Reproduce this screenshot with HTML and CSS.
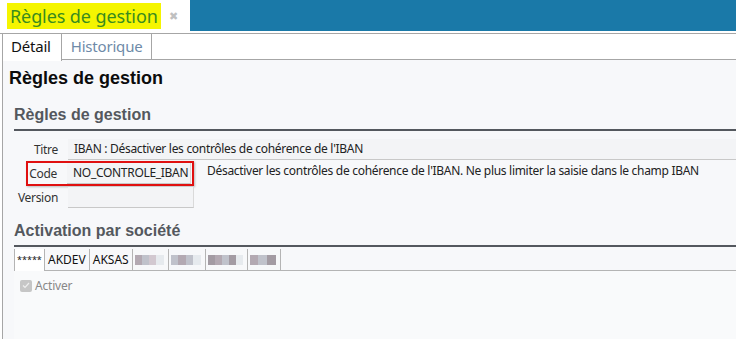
FILE: index.html
```html
<!DOCTYPE html>
<html lang="fr">
<head>
<meta charset="utf-8">
<link rel="stylesheet" href="styles.css">
</head>
<body>
<div class="topbar">
  <div class="doc-tab">
    <span class="doc-title">Règles de gestion</span>
    <span class="doc-close">✖</span>
  </div>
  <div class="blue"></div>
</div>
<div class="tabs">
  <div class="tab active">Détail</div>
  <div class="tab">Historique</div>
  <div class="tab-fill"></div>
</div>
<div class="page">
  <h1 class="page-title">Règles de gestion</h1>
  <div class="section">
    <h2 class="section-title">Règles de gestion</h2>
    <div class="form">
      <div class="row">
        <span class="label">Titre</span>
        <div class="input wide">IBAN : Désactiver les contrôles de cohérence de l'IBAN</div>
      </div>
      <div class="row">
        <div class="hl">
          <span class="label">Code</span>
          <div class="input">NO_CONTROLE_IBAN</div>
        </div>
        <span class="desc">Désactiver les contrôles de cohérence de l'IBAN. Ne plus limiter la saisie dans le champ IBAN</span>
      </div>
      <div class="row">
        <span class="label">Version</span>
        <div class="input"></div>
      </div>
    </div>
  </div>
  <div class="section">
    <h2 class="section-title second">Activation par société</h2>
    <div class="subtabs">
      <div class="stab active">*****</div>
      <div class="stab">AKDEV</div>
      <div class="stab">AKSAS</div>
      <div class="stab blur w1"><i class="b1"></i><i class="b2"></i><i class="b4"></i><i class="b5"></i></div>
      <div class="stab blur w2"><i class="b2"></i><i class="b1"></i><i class="b2"></i><i class="b5"></i></div>
      <div class="stab blur w3"><i class="b3"></i><i class="b1"></i><i class="b2"></i><i class="b3"></i><i class="b5"></i></div>
      <div class="stab blur w4"><i class="b1"></i><i class="b2"></i><i class="b3"></i></div>
      <div class="stab-fill"></div>
    </div>
    <div class="subpanel">
      <label class="check">
        <span class="box"><svg width="8" height="7" viewBox="0 0 8 7"><path d="M1 3.5 L3 5.5 L7 1" fill="none" stroke="#eee" stroke-width="1.2"/></svg></span>
        Activer
      </label>
    </div>
  </div>
</div>
</body>
</html>
```
FILE: styles.css
```css
* { box-sizing: border-box; }
html, body { margin: 0; padding: 0; }
body {
  width: 736px;
  height: 339px;
  overflow: hidden;
  background: #fff;
  font-family: "Segoe UI", "Noto Sans", "Open Sans", sans-serif;
  font-size: 12px;
  color: #222;
}
.topbar {
  display: flex;
  height: 31px;
}
.doc-tab {
  width: 190px;
  display: flex;
  align-items: center;
  padding-left: 7px;
  background: #fff;
}
.doc-title {
  background: #f5f500;
  color: #3a8c1e;
  font-size: 18px;
  line-height: 26px;
  padding: 0 3px;
  height: 26px;
  letter-spacing: -0.1px;
}
.doc-close {
  color: #c0c0c0;
  font-size: 11px;
  margin-left: 8px;
}
.blue {
  flex: 1;
  background: #1a79a8;
}
.tabs {
  display: flex;
  margin-top: 2px;
  border-top: 1px solid #a6a6a6;
  height: 27px;
  padding-left: 2px;
}
.tab {
  padding: 0 9px;
  height: 26px;
  line-height: 24px;
  font-size: 15px;
  color: #6e8aa8;
  border-right: 1px solid #a6a6a6;
  border-bottom: 1px solid #a6a6a6;
  background: #fff;
  letter-spacing: -0.2px;
}
.tab.active {
  color: #111;
  border-left: 1px solid #a6a6a6;
  border-bottom: none;
  height: 27px;
  padding: 0 10px 0 8px;
}
.tab-fill {
  flex: 1;
  height: 26px;
  border-bottom: 1px solid #a6a6a6;
}
.page {
  margin-left: 2px;
  border-left: 1px solid #a6a6a6;
  background: #f7f8fa;
  height: 280px;
  padding: 6px 0 0 6px;
}
.page-title {
  margin: 0;
  font-family: "Liberation Sans", Arial, sans-serif;
  font-weight: bold;
  font-size: 18px;
  line-height: 24px;
  color: #0c0c0c;
}
.section {
  margin-left: 5px;
}
.section-title {
  margin: 0;
  font-family: "Liberation Sans", Arial, sans-serif;
  font-weight: bold;
  font-size: 16px;
  line-height: 20px;
  color: #54585e;
  padding-top: 15px;
  padding-bottom: 4px;
  border-bottom: 2px solid #54585e;
}
.section-title.second {
  padding-top: 13px;
  padding-bottom: 4px;
}
.form {
  padding-top: 8px;
  display: flex;
  flex-direction: column;
  gap: 3px;
  letter-spacing: -0.3px;
}
.row {
  display: flex;
  align-items: center;
  height: 21px;
}
.label {
  width: 44px;
  text-align: right;
  color: #333;
  margin-right: 10px;
}
.input {
  width: 126px;
  height: 21px;
  line-height: 20px;
  padding-left: 6px;
  background: #f3f4f6;
  border-bottom: 1px solid #c8c8c8;
  border-right: 1px solid #dadada;
  color: #222;
  font-size: 12px;
}
.input.wide {
  flex: 1;
  border-right: none;
}
.hl {
  display: flex;
  align-items: center;
  margin-left: 12px;
  padding: 1px 1px 1px 0;
  border: 2px solid #e01010;
  height: 25px;
  box-shadow: 1px 1px 2px rgba(0,0,0,0.25);
}
.hl .label {
  width: 29px;
  margin-right: 10px;
}
.hl .input {
  width: 124px;
}
.desc {
  margin-left: 13px;
  margin-top: -6px;
  color: #222;
}
.subtabs {
  display: flex;
  margin-top: 2px;
  height: 22px;
}
.stab {
  height: 22px;
  line-height: 21px;
  padding: 0 3px;
  border-right: 1px solid #b4b4b4;
  border-bottom: 1px solid #b4b4b4;
  font-size: 12px;
  color: #111;
  letter-spacing: 0;
}
.stab.active {
  border-bottom: none;
  background: #fff;
  border-left: 1px solid #b4b4b4;
  padding: 0 2px;
  font-size: 9px;
  width: 31px;
  letter-spacing: 0;
}
.stab.blur {
  display: flex;
  align-items: center;
  padding: 0 4px 0 2px;
}
.w1 { width: 36px; }
.w2 { width: 37px; }
.w3 { width: 42px; }
.w4 { width: 33px; }
.stab.blur i {
  display: block;
  height: 10px;
  flex: 1;
}
.b1 { background: #b3a9b2; }
.b2 { background: #c0c2cb; }
.b3 { background: #a39ba3; }
.b4 { background: #d2c8d0; }
.b5 { background: #e6eaee; }
.stab-fill {
  flex: 1;
  border-bottom: 1px solid #b4b4b4;
}
.subpanel {
  height: 80px;
  padding: 6px 6px;
  background: #f9fafb;
}
.check {
  display: flex;
  align-items: center;
  gap: 3px;
  color: #888;
  font-size: 12px;
  letter-spacing: -0.2px;
}
.box {
  width: 12px;
  height: 12px;
  border-radius: 2px;
  background: #c6c6c6;
  display: flex;
  align-items: center;
  justify-content: center;
}
```
